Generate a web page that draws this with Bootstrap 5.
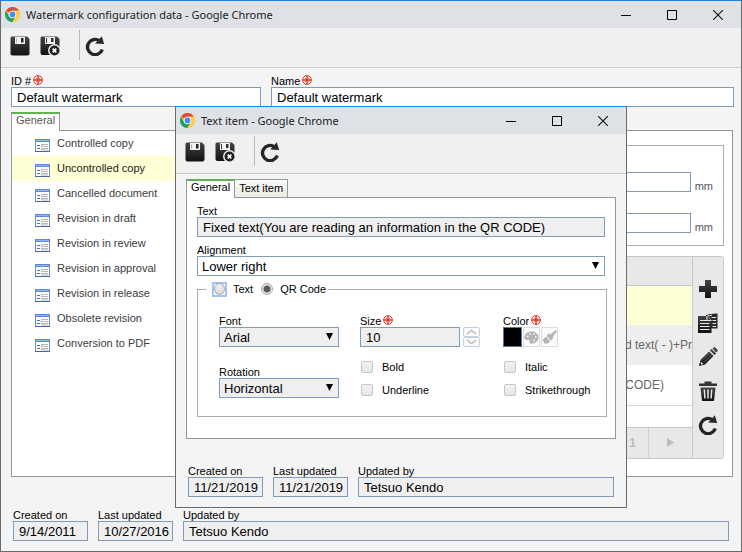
<!DOCTYPE html>
<html lang="en">
<head>
<meta charset="utf-8">
<meta name="viewport" content="width=device-width, initial-scale=1">
<title>Watermark configuration data</title>
<link href="https://cdn.jsdelivr.net/npm/bootstrap@5.3.0/dist/css/bootstrap.min.css" rel="stylesheet">
<style>
body{font-family:"Liberation Sans",Arial,sans-serif;font-size:11px;line-height:12px;color:#000;background:#f4f4f4}
.win{background:#f4f4f4;border:1px solid #696b6f;border-top-color:#1883d7}
.win-main{min-height:100vh}
.win-dialog{top:106px;left:175px;right:115px;min-height:402px;z-index:5}
.titlebar{height:27px;background:#dee1e6;padding-left:4px;font-family:"Noto Sans","Open Sans",sans-serif;font-size:11px;line-height:16px;color:#222;gap:6px}
.ctl{width:46px;height:27px;color:#000}
.tools{height:40px;background:#f0f0f0;border-bottom:1px solid #cbcbcb;padding-left:9px}
.bare{padding:0;border:0;background:none;display:flex;align-items:center;justify-content:center}
.tool-sep{width:1px;height:30px;background:#b9b9b9;margin:2px 5px 0 19px}
.tool-pair{gap:10px}
.area{padding:7px 8px 0 10px}
.ident{gap:10px;margin:0 -1px 5px 0}
.id-field{width:250px}
.lbl{display:flex;height:12px;gap:2px;white-space:nowrap}
.box{display:block;width:100%;height:20px;border:1px solid #7f9db9;border-radius:0;background-color:#fff;color:#000;font-size:13px;line-height:18px;padding:0 5px;appearance:none}
.box.off{background-color:#efefef}
select.box{padding:1px 4px 0;line-height:17px;background-image:url("data:image/svg+xml,%3Csvg xmlns='http://www.w3.org/2000/svg' width='7' height='7'%3E%3Cpath d='M0 0h7L3.500 7z'/%3E%3C/svg%3E");background-repeat:no-repeat;background-position:right 5px top 5px}
.date-field{width:75px}
.date-field .box{padding:0 0 0 5px}
.foot{gap:10px;padding:0 12px 10px}
.win-main>.foot{padding-top:32px}
.tabs{height:18px;gap:0}
.tab{height:19px;border:1px solid #8d9d98;border-bottom:0;background:#fff;padding:0 4px;border-radius:0;line-height:12px;font-size:11px;display:flex;align-items:flex-start;position:relative;color:#000;white-space:nowrap}
.tab.on{border-top:2px solid #62b152;z-index:1}
.tab.idle{height:18px;border-left:0;background:linear-gradient(#fafaf7,#ecebe5);padding-top:2px}
.win-main>.area .tab{color:#555}
.pane{background:#fff;border:1px solid #8d9999}
.tree{width:190px}
.tree a{height:25px;padding:0 0 1px 23px;gap:7px;color:#3c3c3c;text-decoration:none}
.tree a.sel{background:#ffffd5;color:#222}
.tree svg{margin-top:5px}
.detail{padding:14px 8px 17px 0}
.frame{border:1px solid #adadad}
.sizes{height:101px;padding:26px 10px 0 0;gap:21px}
.unit{color:#555}
.grid{border:1px solid #c8c8c8;border-radius:3px;background:#fff;overflow:hidden;margin-top:10px;color:#666;font-size:12px}
.grid th{height:28px;background:#e8e8e8;border-bottom:1px solid #c8c8c8;padding:0}
.grid td{height:40px;padding:0;white-space:nowrap;text-align:right}
.grid tr.sel td{background:#ffffd5}
.grid tr.alt td{background:#eee}
.grid tr.last td{border-bottom:1px solid #d4d4d4;padding-right:28px}
.pager{height:31px;margin-top:21px;background:#e8e8e8;border-top:1px solid #c8c8c8}
.pager button{height:30px;color:#bbb;font-weight:700;font-size:12px}
.page-one{width:31px}
.page-next.bare{width:44px;border-left:1px solid #d0d0d0}
.side{width:31px;border-left:1px solid #c8c8c8;background:#e8e8e8;padding-top:22px;gap:14px}
.item{padding:5px 10px 0}
.item-pane{padding:7px 10px 21px}
.next-lbl{margin-top:7px}
.opts{margin-top:5px;padding:0 0 18px 21px;margin-right:-2px}
.opts legend{float:none;width:auto;height:16px;margin:0 0 18px -13px;padding:0 2px 0 6px;font-size:11px;line-height:14px}
.kind-text{margin:0 8px 0 6px}
.kind-code{margin-left:7px}
.fields{grid-template-columns:120px 122px 1fr;display:grid;column-gap:21px;row-gap:14px}
.turn{padding-top:5px}
.size-box{width:100px;margin-right:3px}
.checks{gap:11px}
.rad{appearance:none;width:12px;height:12px;margin:0;border:1px solid #aaa;border-radius:50%;background:linear-gradient(#f0f0f0,#dcdcdc)}
.rad:checked{background:radial-gradient(circle,#5b5b5b 0 3px,#e6e6e6 4px)}
.ring{width:15px;height:15px;border:2px solid #a5c3f5;display:flex;align-items:center;justify-content:center}
.chk{appearance:none;width:12px;height:12px;margin:0 9px 0 1px;border:1px solid #c6c6c6;border-radius:2px;background:linear-gradient(#f2f2f2,#e6e6e6)}
.picks{gap:1px}
.spin.bare{width:17px;height:10px;border:1px solid #c3d1de;border-radius:2px;background:#fafafa}
.swatch{width:19px;height:20px;border:1px solid #5a7893;background:#000;padding:0}
.pick.bare{width:17px;height:20px;border:1px solid #d5dfe8;background:#fafafa}
</style>
</head>
<body>
<svg width="0" height="0" class="position-absolute" aria-hidden="true">
<defs>
<linearGradient id="ink" x1="0" y1="0" x2="0" y2="1"><stop offset="0" stop-color="#444"/><stop offset="1" stop-color="#111"/></linearGradient>
<symbol id="chrome" viewBox="0 0 16 16"><circle cx="8" cy="8" r="8" fill="#fcc934"/><path d="M8 8 1.070 4A8 8 0 0 1 14.930 4H8Z" fill="#dd4b3e"/><path d="M1.070 4A8 8 0 0 0 8 16L11.460 10 8 8 4.500 10Z" fill="#1da462"/><path d="M8 4h6.930A8 8 0 0 1 8 16l3.500-6Z" fill="#ffcd46"/><circle cx="8" cy="8" r="4" fill="#fff"/><circle cx="8" cy="8" r="3.100" fill="#4a8af4"/></symbol>
<symbol id="save" viewBox="0 0 20 20"><path d="M2 .5h15l2.500 2.500v14.500q0 2-2 2H2.500q-2 0-2-2V2Q.5.5 2 .5z" fill="url(#ink)"/><path d="M5 1h10v7H5z" fill="#f2f2f2"/><path d="M11 2h2.500v4.500H11z" fill="#222"/><path d="M6 2v5h1V2z" fill="#bbb"/></symbol>
<symbol id="savex" viewBox="0 0 20 20"><path d="M2 .5h15l2.500 2.500v14.500q0 1.500-1 1.500H2.500q-2 0-2-2V2Q.5.5 2 .5z" fill="url(#ink)"/><path d="M5 1h10v7H5z" fill="#f2f2f2"/><path d="M11 2h2.500v4H11zM6 2v5h1V2z" fill="#333"/><circle cx="14.500" cy="14.500" r="6.500" fill="#f0f0f0"/><circle cx="14.500" cy="14.500" r="5" fill="#222"/><path d="m12.700 12.700 3.600 3.600m0-3.600-3.600 3.600" stroke="#fff" stroke-width="1.700"/></symbol>
<symbol id="reload" viewBox="0 0 20 20"><path d="M14.500 4.800A7.600 7.600 0 1 0 17.300 13.500" fill="none" stroke="#262626" stroke-width="3.400"/><path d="M16.800.3 19.200 8l-9-.4z" fill="#2a2a2a"/></symbol>
<symbol id="req" viewBox="0 0 10 10"><circle cx="5" cy="5" r="4.400" fill="#fff" stroke="#e0301e"/><path d="M5 1v8M1 5h8" stroke="#e0301e" stroke-width="1.400"/><path d="M3 3l4 4m0-4L3 7" stroke="#e0301e" stroke-width=".7"/></symbol>
<symbol id="form" viewBox="0 0 15 13"><path d="M.5.5h14v12H.5z" fill="#fff" stroke="#6d8fc7"/><path d="M0 0h15v3H0z" fill="#5b8ad0"/><path d="M1 1h13v1H1z" fill="#8fb4ea"/><path d="M2 6.500h3M2 9.500h3" stroke="#3f73c4"/><path d="M13 5.500H6.500v2H13M13 9.500H6.500v1.500H13" fill="none" stroke="#b5b5b5"/><path d="M0 12.500h15" stroke="#4a65a0"/></symbol>
<symbol id="min" viewBox="0 0 10 10"><path d="M0 5.500h10" stroke="#000"/></symbol>
<symbol id="max" viewBox="0 0 10 10"><path d="M.5.5h9v9h-9z" fill="none" stroke="#000"/></symbol>
<symbol id="shut" viewBox="0 0 10 10"><path d="m0 0 10 10M10 0 0 10" stroke="#111" stroke-width="1.100"/></symbol>
</defs>
</svg>

<main class="win win-main d-flex flex-column">
  <header class="titlebar d-flex align-items-center">
    <svg width="15" height="15"><use href="#chrome"/></svg>
    <span class="flex-grow-1">Watermark configuration data - Google Chrome</span>
    <div class="d-flex">
      <button type="button" class="bare ctl" aria-label="Minimize"><svg width="10" height="10"><use href="#min"/></svg></button>
      <button type="button" class="bare ctl" aria-label="Maximize"><svg width="10" height="10"><use href="#max"/></svg></button>
      <button type="button" class="bare ctl" aria-label="Close"><svg width="10" height="10"><use href="#shut"/></svg></button>
    </div>
  </header>
  <div class="tools d-flex align-items-start">
    <div class="tool-pair d-flex pt-2">
      <button type="button" class="bare" aria-label="Save"><svg width="20" height="20"><use href="#save"/></svg></button>
      <button type="button" class="bare" aria-label="Save and close"><svg width="20" height="20"><use href="#savex"/></svg></button>
    </div>
    <span class="tool-sep"></span>
    <button type="button" class="bare pt-2" aria-label="Refresh"><svg width="20" height="20"><use href="#reload"/></svg></button>
  </div>

  <div class="area flex-grow-1 d-flex flex-column">
    <div class="ident d-flex">
      <div class="id-field"><label class="lbl" for="wid">ID # <svg width="10" height="10"><use href="#req"/></svg></label><input class="box" id="wid" value="Default watermark"></div>
      <div class="flex-grow-1"><label class="lbl" for="wname">Name <svg width="10" height="10"><use href="#req"/></svg></label><input class="box" id="wname" value="Default watermark"></div>
    </div>
    <div class="tabs d-flex"><button type="button" class="tab on">General</button></div>
    <section class="pane flex-grow-1 d-flex">
      <nav class="tree flex-shrink-0">
        <a href="#" class="d-flex align-items-center"><svg width="15" height="13"><use href="#form"/></svg>Controlled copy</a>
        <a href="#" class="sel d-flex align-items-center"><svg width="15" height="13"><use href="#form"/></svg>Uncontrolled copy</a>
        <a href="#" class="d-flex align-items-center"><svg width="15" height="13"><use href="#form"/></svg>Cancelled document</a>
        <a href="#" class="d-flex align-items-center"><svg width="15" height="13"><use href="#form"/></svg>Revision in draft</a>
        <a href="#" class="d-flex align-items-center"><svg width="15" height="13"><use href="#form"/></svg>Revision in review</a>
        <a href="#" class="d-flex align-items-center"><svg width="15" height="13"><use href="#form"/></svg>Revision in approval</a>
        <a href="#" class="d-flex align-items-center"><svg width="15" height="13"><use href="#form"/></svg>Revision in release</a>
        <a href="#" class="d-flex align-items-center"><svg width="15" height="13"><use href="#form"/></svg>Obsolete revision</a>
        <a href="#" class="d-flex align-items-center"><svg width="15" height="13"><use href="#form"/></svg>Conversion to PDF</a>
      </nav>
      <div class="detail flex-grow-1">
        <div class="frame sizes d-flex flex-column">
          <label class="d-flex align-items-end gap-1"><input class="box"><span class="unit">mm</span></label>
          <label class="d-flex align-items-end gap-1"><input class="box"><span class="unit">mm</span></label>
        </div>
        <div class="grid d-flex">
          <div class="flex-grow-1 overflow-hidden">
            <table class="w-100">
              <thead><tr><th></th></tr></thead>
              <tbody>
                <tr class="sel"><td></td></tr>
                <tr class="alt"><td>d text( - )+Pr</td></tr>
                <tr class="last"><td>CODE)</td></tr>
              </tbody>
            </table>
            <div class="pager d-flex justify-content-end">
              <button type="button" class="bare page-one">1</button>
              <button type="button" class="bare page-next" aria-label="Next page"><svg width="7" height="9"><path d="M0 0l7 4.500L0 9z" fill="#bbb"/></svg></button>
            </div>
          </div>
          <div class="side d-flex flex-column align-items-center">
            <button type="button" class="bare" aria-label="Add"><svg width="20" height="20"><path d="M7 1h6v6h6v6h-6v6H7v-6H1V7h6z" fill="url(#ink)"/></svg></button>
            <button type="button" class="bare" aria-label="Copy"><svg width="20" height="20"><path d="M8 1.500 18 .5h1.500v15H13v-9L10.500 4H8z" fill="#2b2b2b"/><path d="M0 3h9l4.500 4.500V20H0z" fill="url(#ink)"/><path d="M2 7.500h7M2 10.500h9.500M2 13.500h9.500M2 16.500h9.500" stroke="#e8e8e8"/><path d="M9 3v4.500h4.500M13.500 4.500h4.500M14.500 7.500h3.500M14.500 10.500h3.500M14.500 13.500h3.500M8 1l3 2 3-1" stroke="#e8e8e8" fill="none"/></svg></button>
            <button type="button" class="bare" aria-label="Edit"><svg width="20" height="20"><path d="M1 19l1.500-6L11 4.500 15.500 9 7 17.500zM12 3.500l1.500-1.500L18 6.500 16.500 8zM14.500 1.500l1-1q1-.6 2 .3l1.700 1.700q.8 1 0 2l-1 1z" fill="url(#ink)"/><path d="M4 13.500 12 5.500M6 15.500l8-8" stroke="#888" stroke-width=".6"/><path d="M2.700 14.500 5.500 17l-2.500.8z" fill="#e8e8e8"/></svg></button>
            <button type="button" class="bare" aria-label="Delete"><svg width="20" height="20"><path d="M1 2.500h5.500V.5h7v2H19V5H1z" fill="#333"/><path d="M2.500 6.500h15L16 20H4z" fill="url(#ink)"/><path d="M6.300 8.500l.6 9M10 8.500v9M13.700 8.500l-.6 9" stroke="#e8e8e8" stroke-width="1.500"/></svg></button>
            <button type="button" class="bare" aria-label="Reload list"><svg width="20" height="20"><use href="#reload"/></svg></button>
          </div>
        </div>
      </div>
    </section>
  </div>

  <footer class="foot d-flex">
    <div class="date-field"><label class="lbl" for="c1">Created on</label><input class="box off" id="c1" value="9/14/2011" readonly></div>
    <div class="date-field"><label class="lbl" for="u1">Last updated</label><input class="box off" id="u1" value="10/27/2016" readonly></div>
    <div class="flex-grow-1"><label class="lbl" for="b1">Updated by</label><input class="box off" id="b1" value="Tetsuo Kendo" readonly></div>
  </footer>
</main>

<div class="win win-dialog position-absolute d-flex flex-column" role="dialog" aria-label="Text item">
  <header class="titlebar d-flex align-items-center">
    <svg width="15" height="15"><use href="#chrome"/></svg>
    <span class="flex-grow-1">Text item - Google Chrome</span>
    <div class="d-flex">
      <button type="button" class="bare ctl" aria-label="Minimize"><svg width="10" height="10"><use href="#min"/></svg></button>
      <button type="button" class="bare ctl" aria-label="Maximize"><svg width="10" height="10"><use href="#max"/></svg></button>
      <button type="button" class="bare ctl" aria-label="Close"><svg width="10" height="10"><use href="#shut"/></svg></button>
    </div>
  </header>
  <div class="tools d-flex align-items-start">
    <div class="tool-pair d-flex pt-2">
      <button type="button" class="bare" aria-label="Save"><svg width="20" height="20"><use href="#save"/></svg></button>
      <button type="button" class="bare" aria-label="Save and close"><svg width="20" height="20"><use href="#savex"/></svg></button>
    </div>
    <span class="tool-sep"></span>
    <button type="button" class="bare pt-2" aria-label="Refresh"><svg width="20" height="20"><use href="#reload"/></svg></button>
  </div>
  <div class="item">
    <div class="tabs d-flex align-items-end"><button type="button" class="tab on align-self-start">General</button><button type="button" class="tab idle">Text item</button></div>
    <section class="pane item-pane">
      <label class="lbl" for="txt">Text</label>
      <input class="box off" id="txt" value="Fixed text(You are reading an information in the QR CODE)" readonly>
      <label class="lbl next-lbl" for="al">Alignment</label>
      <select class="box" id="al"><option>Lower right</option></select>
      <fieldset class="frame opts">
        <legend class="d-flex align-items-center">
          <span class="ring"><input class="rad" type="radio" name="kind" id="k1"></span><label class="kind-text" for="k1">Text</label>
          <input class="rad" type="radio" name="kind" id="k2" checked><label class="kind-code" for="k2">QR Code</label>
        </legend>
        <div class="fields">
          <div><label class="lbl" for="fo">Font</label><select class="box off" id="fo"><option>Arial</option></select></div>
          <div><label class="lbl" for="sz">Size <svg width="10" height="10"><use href="#req"/></svg></label>
            <div class="d-flex"><input class="box off size-box" id="sz" value="10">
              <div class="d-flex flex-column">
                <button type="button" class="bare spin" aria-label="Increase"><svg width="11" height="6"><path d="m1 5 4.500-3.500L10 5" fill="none" stroke="#bbb" stroke-width="1.500"/></svg></button>
                <button type="button" class="bare spin" aria-label="Decrease"><svg width="11" height="6"><path d="m1 1 4.500 3.500L10 1" fill="none" stroke="#bbb" stroke-width="1.500"/></svg></button>
              </div></div></div>
          <div><label class="lbl" for="co">Color <svg width="10" height="10"><use href="#req"/></svg></label>
            <div class="picks d-flex"><button type="button" class="swatch" id="co"></button>
              <button type="button" class="bare pick" aria-label="Palette"><svg width="15" height="13"><path d="M7.500.5C3.500.5.5 3 .5 6.500c0 2 1.500 3 3 2.500s2.500.5 2 2 .5 1.500 2 1.500c4 0 7-2.500 7-6s-3-6-7-6z" fill="#b4b4b4"/><path d="M3 5.500h1.500M5.500 3h1.500M9.500 3h1.500M11 6h1.500M9.500 9h1.500" stroke="#fff" stroke-width="1.500"/></svg></button>
              <button type="button" class="bare pick" aria-label="Brush"><svg width="15" height="15"><path d="M13.500 0 15 1.500 10.500 7l1 1L9 10.500 4.500 6 7 3.500l1.500 1zM3.800 6.700l4.500 4.500L5 14l-1-1-1 1-1.500-1.500.7-1.500L0 10.500z" fill="#b4b4b4"/></svg></button>
            </div></div>
          <div class="turn"><label class="lbl" for="ro">Rotation</label><select class="box off" id="ro"><option>Horizontal</option></select></div>
          <div class="checks d-flex flex-column">
            <label class="d-flex"><input class="chk" type="checkbox">Bold</label>
            <label class="d-flex"><input class="chk" type="checkbox">Underline</label>
          </div>
          <div class="checks d-flex flex-column">
            <label class="d-flex"><input class="chk" type="checkbox">Italic</label>
            <label class="d-flex"><input class="chk" type="checkbox">Strikethrough</label>
          </div>
        </div>
      </fieldset>
    </section>
  </div>
  <footer class="foot d-flex mt-auto">
    <div class="date-field"><label class="lbl" for="c2">Created on</label><input class="box off" id="c2" value="11/21/2019" readonly></div>
    <div class="date-field"><label class="lbl" for="u2">Last updated</label><input class="box off" id="u2" value="11/21/2019" readonly></div>
    <div class="flex-grow-1"><label class="lbl" for="b2">Updated by</label><input class="box off" id="b2" value="Tetsuo Kendo" readonly></div>
  </footer>
</div>
<script src="https://cdn.jsdelivr.net/npm/bootstrap@5.3.0/dist/js/bootstrap.bundle.min.js"></script>
</body>
</html>
